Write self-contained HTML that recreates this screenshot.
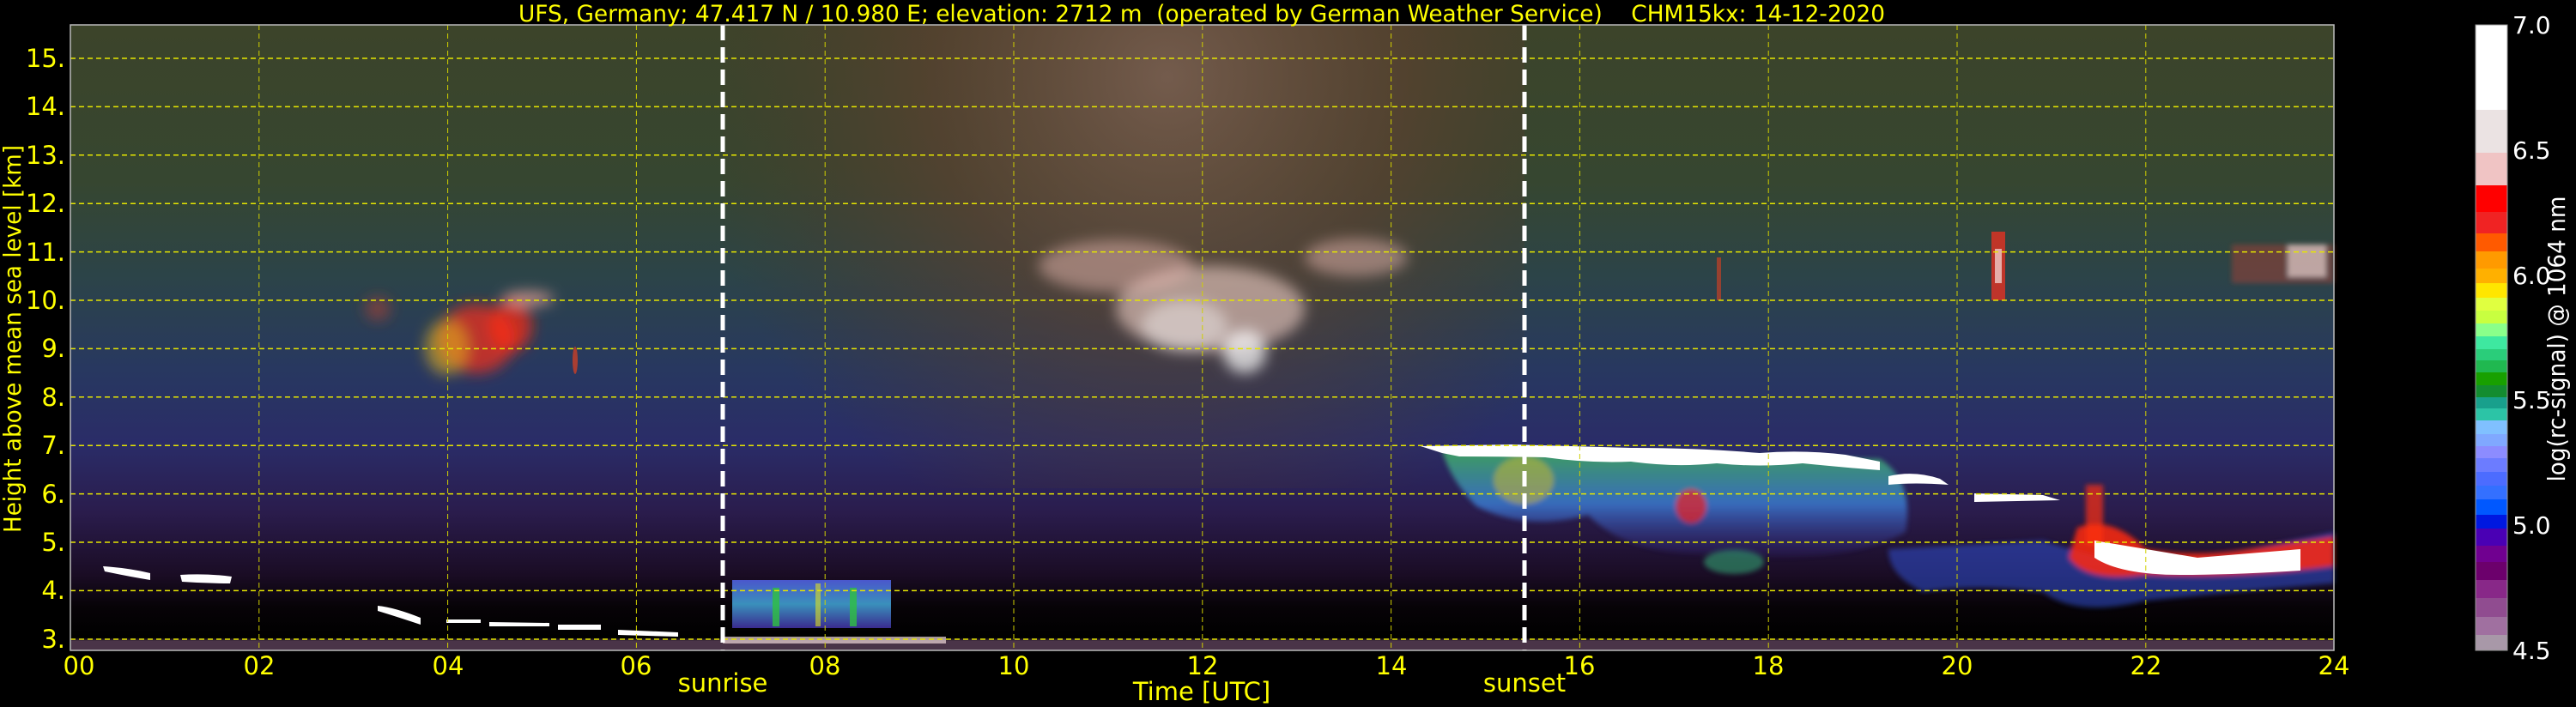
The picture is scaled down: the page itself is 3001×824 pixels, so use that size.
<!DOCTYPE html>
<html><head><meta charset="utf-8"><style>
html,body{margin:0;padding:0;background:#000;width:3001px;height:824px;overflow:hidden}
svg{display:block}
text{font-family:"DejaVu Sans","Liberation Sans",sans-serif}
</style></head><body>
<svg width="3001" height="824" viewBox="0 0 3001 824" xmlns="http://www.w3.org/2000/svg">
<defs>
<linearGradient id="bg" x1="0" y1="29" x2="0" y2="758" gradientUnits="userSpaceOnUse">
<stop offset="0" stop-color="#3c442a"/>
<stop offset="0.25" stop-color="#364630"/>
<stop offset="0.4" stop-color="#2c4448"/>
<stop offset="0.55" stop-color="#283860"/>
<stop offset="0.67" stop-color="#2a2c68"/>
<stop offset="0.78" stop-color="#2a1c4c"/>
<stop offset="0.88" stop-color="#1a0c24"/>
<stop offset="0.93" stop-color="#070307"/>
<stop offset="0.98" stop-color="#000"/>
<stop offset="0.985" stop-color="#4a3448"/>
<stop offset="1" stop-color="#4a3448"/>
</linearGradient>
<radialGradient id="mid" cx="1360" cy="90" r="560" gradientUnits="userSpaceOnUse">
<stop offset="0" stop-color="#7a5e50" stop-opacity="0.9"/>
<stop offset="0.5" stop-color="#5e4030" stop-opacity="0.65"/>
<stop offset="1" stop-color="#4a3828" stop-opacity="0"/>
</radialGradient>
<linearGradient id="prec" x1="0" y1="0" x2="0" y2="1">
<stop offset="0" stop-color="#40b060"/>
<stop offset="0.5" stop-color="#3a7ad0"/>
<stop offset="1" stop-color="#3a2a90" stop-opacity="0.2"/>
</linearGradient>
<linearGradient id="curt" x1="0" y1="0" x2="0" y2="1">
<stop offset="0" stop-color="#5060e0"/>
<stop offset="0.5" stop-color="#40a0d0"/>
<stop offset="1" stop-color="#4030a0"/>
</linearGradient>
<filter id="bl" x="-20%" y="-20%" width="140%" height="140%"><feGaussianBlur stdDeviation="8"/></filter>
<filter id="bl2" x="-20%" y="-20%" width="140%" height="140%"><feGaussianBlur stdDeviation="3"/></filter>
</defs>

<rect x="82" y="29" width="2637" height="729" fill="url(#bg)"/>
<rect x="842" y="29" width="934" height="540" fill="url(#mid)"/>

<!-- early cirrus -->
<g filter="url(#bl)">
<ellipse cx="555" cy="395" rx="45" ry="40" fill="#e03020" opacity="0.8"/>
<ellipse cx="520" cy="405" rx="25" ry="32" fill="#e0b020" opacity="0.6"/>
<ellipse cx="595" cy="380" rx="25" ry="30" fill="#ff2a10" opacity="0.7"/>
<ellipse cx="615" cy="348" rx="30" ry="8" fill="#ffb0a0" opacity="0.7"/>
<ellipse cx="440" cy="360" rx="15" ry="14" fill="#c04030" opacity="0.5"/>
</g>
<ellipse cx="670" cy="420" rx="3" ry="16" fill="#e04020" opacity="0.7"/>

<!-- midday cirrus -->
<g filter="url(#bl)">
<ellipse cx="1410" cy="360" rx="110" ry="50" fill="#f0d0c8" opacity="0.6"/>
<ellipse cx="1300" cy="310" rx="90" ry="30" fill="#e8b8b0" opacity="0.5"/>
<ellipse cx="1580" cy="300" rx="60" ry="22" fill="#e8b8b0" opacity="0.5"/>
<ellipse cx="1450" cy="410" rx="25" ry="25" fill="#fff" opacity="0.7"/>
<ellipse cx="1380" cy="380" rx="50" ry="30" fill="#fff" opacity="0.4"/>
</g>

<!-- right cirrus -->
<rect x="2000" y="300" width="5" height="50" fill="#e04020" opacity="0.6"/>
<rect x="2320" y="270" width="16" height="80" fill="#f03020" opacity="0.75"/>
<rect x="2324" y="290" width="8" height="40" fill="#fff" opacity="0.6"/>
<g filter="url(#bl2)">
<rect x="2600" y="285" width="119" height="45" fill="#c04030" opacity="0.4"/>
<rect x="2665" y="285" width="45" height="38" fill="#f8e8e8" opacity="0.6"/>
</g>

<!-- evening precip -->
<g filter="url(#bl2)">
<path d="M1680 525 L2190 535 Q2230 560 2220 620 Q2150 660 2000 645 Q1900 650 1850 600 Q1780 620 1720 590 Q1690 560 1680 525Z" fill="url(#prec)" opacity="0.85"/>
<ellipse cx="1775" cy="560" rx="35" ry="28" fill="#e8c020" opacity="0.45"/>
<ellipse cx="1970" cy="590" rx="18" ry="20" fill="#f02020" opacity="0.7"/>
<ellipse cx="2020" cy="655" rx="35" ry="14" fill="#30a070" opacity="0.6"/>
<path d="M2200 640 L2380 630 Q2440 650 2500 660 L2620 640 L2719 620 L2719 680 Q2600 690 2500 700 Q2420 720 2380 690 Q2300 680 2240 690 Q2200 670 2200 640Z" fill="#3050d0" opacity="0.55"/>
<path d="M2420 615 Q2460 600 2500 640 Q2560 650 2620 640 L2719 625 L2719 660 Q2600 675 2500 670 Q2430 680 2410 650 Z" fill="#ff2a10" opacity="0.85"/>
<rect x="2430" y="565" width="20" height="70" fill="#ff3010" opacity="0.7"/>
</g>
<path d="M2440 630 Q2500 640 2560 650 Q2620 645 2680 640 L2680 665 Q2600 670 2540 670 Q2470 670 2440 650 Z" fill="#fff"/>

<!-- evening white cloud top -->
<path d="M1655 520 L1760 518 Q1830 520 1900 522 Q1980 522 2050 528 Q2100 524 2150 530 L2190 538 L2190 548 Q2150 545 2100 540 Q2050 545 2000 540 Q1950 545 1900 538 Q1850 540 1800 533 Q1740 532 1700 532 L1680 528Z" fill="#fff"/>
<path d="M2200 555 Q2230 548 2260 558 L2270 565 Q2230 562 2200 565Z" fill="#fff"/>
<path d="M2300 575 L2380 577 L2400 583 L2300 585Z" fill="#fff"/>

<!-- early low clouds -->
<path d="M120 660 Q150 662 175 668 L175 676 Q150 672 122 666Z" fill="#fff"/>
<path d="M210 670 Q240 668 270 672 L268 680 Q240 680 212 678Z" fill="#fff"/>
<path d="M440 706 Q460 708 490 720 L490 728 Q460 718 440 712Z" fill="#fff"/>
<path d="M520 722 L560 722 L560 726 L520 726Z M570 725 L640 726 L640 730 L570 730Z M650 728 L700 728 L700 734 L650 734Z M720 734 L790 737 L790 742 L720 740Z" fill="#fff"/>

<!-- morning curtains -->
<rect x="853" y="676" width="185" height="56" fill="url(#curt)" opacity="0.9"/>
<rect x="900" y="685" width="8" height="45" fill="#30c040" opacity="0.8"/>
<rect x="950" y="680" width="6" height="50" fill="#e0e020" opacity="0.6"/>
<rect x="990" y="685" width="8" height="45" fill="#30c040" opacity="0.8"/>
<rect x="842" y="742" width="260" height="8" fill="#f0d8d8" opacity="0.7"/>

<!-- grid -->
<g stroke="#e6e600" stroke-width="1.5" stroke-dasharray="6,4" fill="none">
<line x1="82" x2="2719" y1="68" y2="68"/><line x1="82" x2="2719" y1="124.4" y2="124.4"/>
<line x1="82" x2="2719" y1="180.8" y2="180.8"/><line x1="82" x2="2719" y1="237.2" y2="237.2"/>
<line x1="82" x2="2719" y1="293.6" y2="293.6"/><line x1="82" x2="2719" y1="350" y2="350"/>
<line x1="82" x2="2719" y1="406.4" y2="406.4"/><line x1="82" x2="2719" y1="462.8" y2="462.8"/>
<line x1="82" x2="2719" y1="519.2" y2="519.2"/><line x1="82" x2="2719" y1="575.6" y2="575.6"/>
<line x1="82" x2="2719" y1="632" y2="632"/><line x1="82" x2="2719" y1="688.4" y2="688.4"/>
<line x1="82" x2="2719" y1="745" y2="745"/>
</g>
<g stroke="#d0d000" stroke-width="1" stroke-dasharray="6,4" fill="none">
<line y1="29" y2="758" x1="301.8" x2="301.8"/><line y1="29" y2="758" x1="521.6" x2="521.6"/>
<line y1="29" y2="758" x1="741.4" x2="741.4"/><line y1="29" y2="758" x1="961.2" x2="961.2"/>
<line y1="29" y2="758" x1="1181" x2="1181"/><line y1="29" y2="758" x1="1400.8" x2="1400.8"/>
<line y1="29" y2="758" x1="1620.6" x2="1620.6"/><line y1="29" y2="758" x1="1840.4" x2="1840.4"/>
<line y1="29" y2="758" x1="2060.2" x2="2060.2"/><line y1="29" y2="758" x1="2280" x2="2280"/>
<line y1="29" y2="758" x1="2499.8" x2="2499.8"/>
</g>
<g stroke="#fff" stroke-width="5" stroke-dasharray="18,8">
<line x1="842" x2="842" y1="29" y2="758"/>
<line x1="1776" x2="1776" y1="29" y2="758"/>
</g>
<rect x="82" y="29" width="2637" height="729" fill="none" stroke="#bbb" stroke-width="1.5"/>

<g fill="#ffff00" font-size="29" text-anchor="end">
<text x="76" y="78">15.</text><text x="76" y="134">14.</text><text x="76" y="191">13.</text>
<text x="76" y="247">12.</text><text x="76" y="304">11.</text><text x="76" y="360">10.</text>
<text x="76" y="416">9.</text><text x="76" y="473">8.</text><text x="76" y="529">7.</text>
<text x="76" y="586">6.</text><text x="76" y="642">5.</text><text x="76" y="698">4.</text>
<text x="76" y="755">3.</text>
</g>
<g fill="#ffff00" font-size="29" text-anchor="middle">
<text x="92" y="786">00</text><text x="302" y="786">02</text><text x="522" y="786">04</text>
<text x="741" y="786">06</text><text x="961" y="786">08</text><text x="1181" y="786">10</text>
<text x="1401" y="786">12</text><text x="1621" y="786">14</text><text x="1840" y="786">16</text>
<text x="2060" y="786">18</text><text x="2280" y="786">20</text><text x="2500" y="786">22</text>
<text x="2719" y="786">24</text>
<text x="842" y="806">sunrise</text><text x="1776" y="806">sunset</text>
<text x="1400" y="816">Time [UTC]</text>
</g>
<text x="14" y="395" fill="#ffff00" font-size="28" text-anchor="middle" transform="rotate(-90 14 395)" dy="10" textLength="452" lengthAdjust="spacingAndGlyphs">Height above mean sea level [km]</text>
<text x="604" y="25" fill="#ffff00" font-size="27" xml:space="preserve" textLength="1592" lengthAdjust="spacingAndGlyphs">UFS, Germany; 47.417 N / 10.980 E; elevation: 2712 m  (operated by German Weather Service)    CHM15kx: 14-12-2020</text>

<g>
<rect x="2884" y="29" width="37" height="99" fill="#ffffff"/>
<rect x="2884" y="128" width="37" height="50" fill="#ebe3e3"/>
<rect x="2884" y="178" width="37" height="38" fill="#f0c4c4"/>
<rect x="2884" y="216" width="37" height="31" fill="#ff0000"/>
<rect x="2884" y="247" width="37" height="25" fill="#f02323"/>
<rect x="2884" y="272" width="37" height="21" fill="#ff5a00"/>
<rect x="2884" y="293" width="37" height="20" fill="#ff9a00"/>
<rect x="2884" y="313" width="37" height="17" fill="#ffb000"/>
<rect x="2884" y="330" width="37" height="17" fill="#ffe600"/>
<rect x="2884" y="347" width="37" height="15" fill="#e0ff40"/>
<rect x="2884" y="362" width="37" height="15" fill="#c8ff40"/>
<rect x="2884" y="377" width="37" height="15" fill="#8aff8a"/>
<rect x="2884" y="392" width="37" height="15" fill="#3ee8a0"/>
<rect x="2884" y="407" width="37" height="13" fill="#2acd7a"/>
<rect x="2884" y="420" width="37" height="14" fill="#20b850"/>
<rect x="2884" y="434" width="37" height="15" fill="#18a000"/>
<rect x="2884" y="449" width="37" height="14" fill="#138c30"/>
<rect x="2884" y="463" width="37" height="13" fill="#18a08c"/>
<rect x="2884" y="476" width="37" height="14" fill="#2cc4a6"/>
<rect x="2884" y="490" width="37" height="16" fill="#80c0ff"/>
<rect x="2884" y="506" width="37" height="14" fill="#80a8ff"/>
<rect x="2884" y="520" width="37" height="14" fill="#8c8cff"/>
<rect x="2884" y="534" width="37" height="16" fill="#6c7cff"/>
<rect x="2884" y="550" width="37" height="16" fill="#4c6cff"/>
<rect x="2884" y="566" width="37" height="16" fill="#3470ff"/>
<rect x="2884" y="582" width="37" height="18" fill="#0058ff"/>
<rect x="2884" y="600" width="37" height="16" fill="#0018e0"/>
<rect x="2884" y="616" width="37" height="20" fill="#4a00b4"/>
<rect x="2884" y="636" width="37" height="19" fill="#700090"/>
<rect x="2884" y="655" width="37" height="21" fill="#6c006c"/>
<rect x="2884" y="676" width="37" height="21" fill="#882888"/>
<rect x="2884" y="697" width="37" height="22" fill="#904c90"/>
<rect x="2884" y="719" width="37" height="21" fill="#a070a0"/>
<rect x="2884" y="740" width="37" height="18" fill="#a898a8"/>
<rect x="2884" y="29" width="37" height="729" fill="none" stroke="#999" stroke-width="1"/>
</g>
<g fill="#fff" font-size="28">
<text x="2927" y="39">7.0</text><text x="2927" y="185">6.5</text><text x="2927" y="331">6.0</text>
<text x="2927" y="476">5.5</text><text x="2927" y="622">5.0</text><text x="2927" y="768">4.5</text>
</g>
<text x="2978" y="395" fill="#fff" font-size="28" text-anchor="middle" transform="rotate(-90 2978 395)" dy="10" textLength="333" lengthAdjust="spacingAndGlyphs">log(rc-signal) @ 1064 nm</text>
</svg>
</body></html>
